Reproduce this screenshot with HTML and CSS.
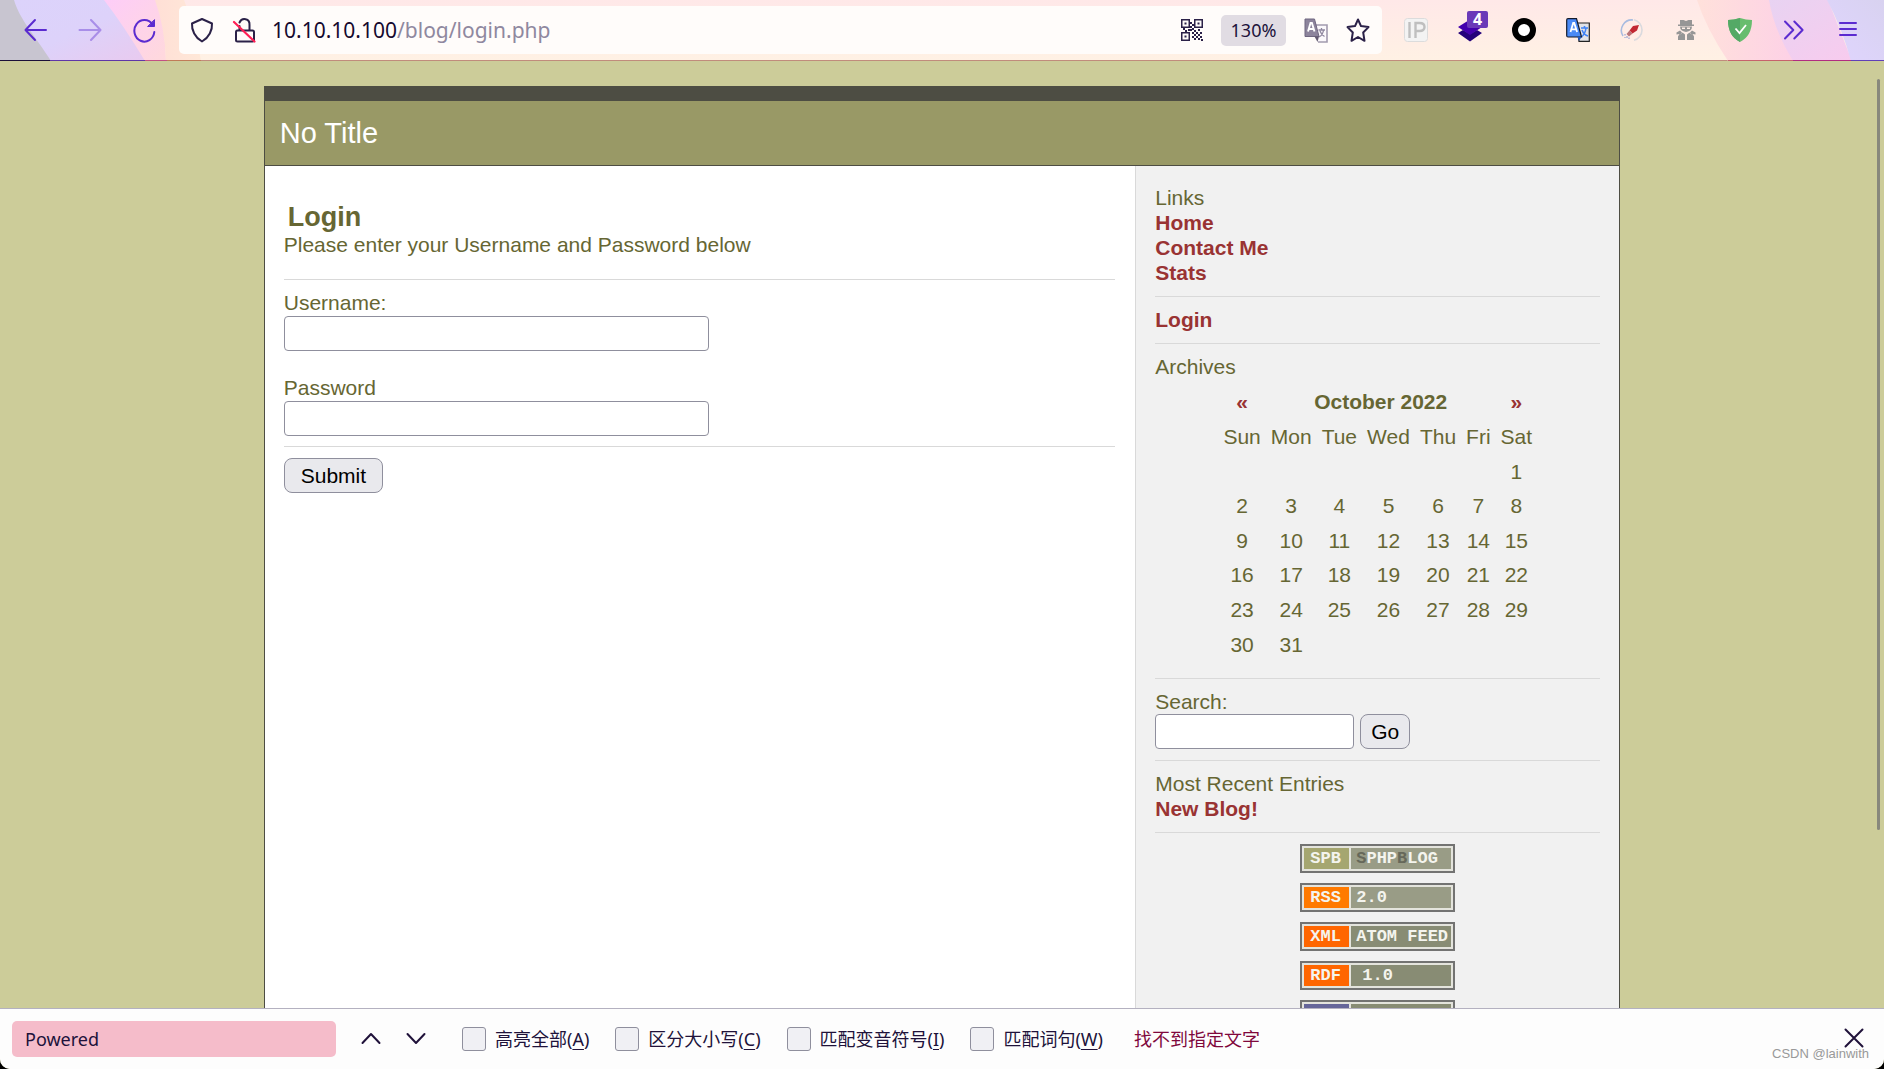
FILE: index.html
```html
<!DOCTYPE html>
<html lang="zh-CN">
<head>
<meta charset="utf-8">
<title>No Title</title>
<link rel="stylesheet" href="styles.css">
</head>
<body>
<div class="window">
<header class="toolbar">
  <svg class="theme theme-left" viewBox="0 0 201 61" width="201" height="61" aria-hidden="true">
    <defs>
      <linearGradient id="lav" x1="0" x2="1" y1="0" y2="1"><stop offset="0" stop-color="#dcd3fb"/><stop offset=".5" stop-color="#ddd2fa"/><stop offset="1" stop-color="#e9caef"/></linearGradient>
      <linearGradient id="pnk" x1="0" x2="1" y1="0" y2="1"><stop offset="0" stop-color="#fdcdf8"/><stop offset="1" stop-color="#ffd9dc"/></linearGradient>
      <linearGradient id="pch" x1="0" x2="1" y1="0" y2="0"><stop offset="0" stop-color="#ffdfd6"/><stop offset="1" stop-color="#ffe8d8"/></linearGradient>
    </defs>
    <path fill="#c8c5d0" d="M0 0H20L52 61H0z"/>
    <path fill="url(#lav)" d="M14 0H110L146 61H51C34 34 20 20 14 0z"/>
    <path fill="url(#pnk)" d="M104 0H156Q166 30 166 61H145Q124 26 104 0z"/>
    <path fill="url(#pch)" d="M155 0H184Q196 30 201 61H166Q165 28 155 0z"/>
    <path fill="#1c1038" d="M0 60h50v1H0z"/><path fill="#5f36a8" d="M50 60h95v1H50z"/><path fill="#c25084" d="M145 60h22v1h-22z"/><path fill="#c07c58" d="M167 60h34v1h-34z"/>
  </svg>
  <svg class="theme theme-right" viewBox="0 0 190 61" width="190" height="61" aria-hidden="true">
    <defs>
      <linearGradient id="r1" x1="0" x2="1" y1="0" y2="0"><stop offset="0" stop-color="#ffe1db"/><stop offset="1" stop-color="#fdd1e6"/></linearGradient>
      <linearGradient id="r2" x1="0" x2="1" y1="0" y2="1"><stop offset="0" stop-color="#e8d3f2"/><stop offset="1" stop-color="#f8cbee"/></linearGradient>
      <linearGradient id="r3" x1="0" x2="1" y1="1" y2="0"><stop offset="0" stop-color="#e0d5ff"/><stop offset="1" stop-color="#d8d2f0"/></linearGradient>
    </defs>
    <path fill="url(#r1)" d="M3 0H76L100 61H34Q12 28 3 0z"/>
    <path fill="url(#r2)" d="M75 0H134L158 61H99Q80 30 75 0z"/>
    <path fill="url(#r3)" d="M133 0H190V61H157Q148 28 133 0z"/>
    <path fill="#c6626c" d="M34 60h65v1H34z"/><path fill="#b12c80" d="M99 60h58v1H99z"/><path fill="#6040b8" d="M157 60h33v1h-33z"/>
  </svg>

  <nav class="nav-buttons" aria-label="Navigation">
    <button class="icon-btn" type="button" aria-label="Back"><svg viewBox="0 0 24 24" width="24" height="24" class="line purple"><path d="M22 12H2M11 2L1.500 12l9.500 10"/></svg></button>
    <button class="icon-btn dim" type="button" aria-label="Forward"><svg viewBox="0 0 24 24" width="24" height="24" class="line purple"><path d="M1.500 12H22M13 2l9.500 10L13 22"/></svg></button>
    <button class="icon-btn" type="button" aria-label="Reload"><svg viewBox="0 0 24 26" width="24" height="26" class="line purple"><path d="M20.500 7.500A10 10.800 0 1 0 22.300 15"/><path d="M22.500 3v6.500H16z" fill="#5b2bd0" stroke-width="1"/></svg></button>
  </nav>

  <div class="urlbar">
    <button class="icon-btn" type="button" aria-label="Tracking protection"><svg viewBox="0 0 24 26" width="24" height="26" class="line ink"><path d="M12 2L22 6.500C22.500 13 19 20.500 12 24.500 5 20.500 1.500 13 2 6.500z"/></svg></button>
    <button class="icon-btn" type="button" aria-label="Connection"><svg viewBox="0 0 24 26" width="24" height="26" class="line ink"><path d="M7.500 5.500C10 0 18 1.500 17.500 8v5.500M5 13.500h15.500q1.500 0 1.500 1.500v8q0 1.500-1.500 1.500h-15Q4 24.500 4 23v-8q0-1.500 1.500-1.500M7.500 9v4"/><path d="M2 5L22.500 24.500" stroke="#ff1f55" stroke-width="2.200"/></svg></button>
    <div class="url"><span class="host">10.10.10.100</span>/blog/login.php</div>
    <button class="icon-btn" type="button" aria-label="QR code"><svg viewBox="0 0 22 22" width="22" height="22" fill="#2b2148"><path fill-rule="evenodd" d="M0 0h9v9H0zM1.500 1.500v6h6v-6zM13 0h9v9h-9zM14.500 1.500v6h6v-6zM0 13h9v9H0zM1.500 14.500v6h6v-6zM3.500 3.500h2v2h-2zM16.500 3.500h2v2h-2zM3.500 16.500h2v2h-2zM9 3h2v2H9zM11 5h2v2h-2zM9 7h2v2H9zM2 9h2v2H2zM4 11h2v2H4zM7 10h4v2H7zM11 9h2v2h-2zM13 11h2v2h-2zM17 10h2v2h-2zM15 13h2v2h-2zM19 13h2v2h-2zM11 13h2v2h-2zM13 15h2v2h-2zM17 15h2v2h-2zM15 17h2v2h-2zM11 17h2v2h-2zM13 19h2v2h-2zM17 19h2v2h-2zM19 17h2v2h-2zM20 20h2v2h-2z"/></svg></button>
    <button class="zoom" type="button">130%</button>
    <button class="icon-btn" type="button" aria-label="Translate"><svg viewBox="0 0 24 25" width="24" height="25"><path d="M11 7h12v17H14" fill="#fbf8fb" stroke="#a29aae" stroke-width="1.600"/><path d="M14.500 12h6.500M17.500 10v2M15 19q4-2 4.500-7M16 13q1.500 4 4.500 5.500" fill="none" stroke="#8f879f" stroke-width="1.300"/><path d="M1 1h9.500L15 18.500H1z" fill="#8d849c" stroke="#6f6680"/><path d="M10.500 18.500h4.500L13.500 24z" fill="#62586f"/><path d="M4 13.500L6.500 5h1.400L10.500 13.500M5 11h4.500" fill="none" stroke="#fff" stroke-width="1.900"/></svg></button>
    <button class="icon-btn" type="button" aria-label="Bookmark"><svg viewBox="0 0 24 24" width="24" height="24" class="line ink"><path d="M12 1.500l3 6.600 7.500 1-5.300 5.400 1.300 8.300L12 19l-6.500 3.800 1.300-8.300L1.500 9.100l7.500-1z"/></svg></button>
  </div>

  <div class="extensions">
    <button class="icon-btn" type="button" aria-label="IP"><svg viewBox="0 0 24 24" width="24" height="24"><rect x=".5" y=".5" width="23" height="23" rx="3" fill="#f3f3f3" stroke="#dcdcdc"/><path d="M5.500 4v16M11.500 20V5h4q5 0 5 4t-5 4h-4" fill="none" stroke="#bfbfbf" stroke-width="2.400"/></svg></button>
    <button class="icon-btn" type="button" aria-label="Layers"><svg viewBox="0 0 24 24" width="24" height="24"><path fill="#23007a" d="M0 15l5-3 7 4 7-4 5 3-12 8.500z"/><path fill="#4300ad" d="M12 1.500L24 9l-12 8L0 9z"/></svg><span class="count">4</span></button>
    <button class="icon-btn" type="button" aria-label="Ring"><svg viewBox="0 0 24 24" width="24" height="24"><circle cx="12" cy="12" r="9" fill="#fff" stroke="#000" stroke-width="6"/></svg></button>
    <button class="icon-btn" type="button" aria-label="Translate page"><svg viewBox="0 0 24 24" width="24" height="24"><path d="M11 5h12.300v18.300H13z" fill="#e2e2e6" stroke="#222" stroke-width="1.200"/><path d="M15 10h7M18.500 8v2M15 19q4-2 5-9M16 12q2 5 6 6" fill="none" stroke="#3f82f5" stroke-width="1.600"/><path d="M2 .7h8.500L15.500 19H2Q.7 19 .7 17.500V2Q.7.700 2 .7z" fill="#4a8af6" stroke="#141b2c" stroke-width="1.200"/><path d="M11.500 19h4L13 23z" fill="#1e57bd"/><path d="M4.500 14L7.200 5h1l2.900 9M5.500 11.300h4.500" fill="none" stroke="#fff" stroke-width="1.800"/></svg></button>
    <button class="icon-btn" type="button" aria-label="Rocket"><svg viewBox="0 0 24 24" width="24" height="24"><path d="M13 2A10.500 10.500 0 0 0 3 18" fill="none" stroke="#a9bce0" stroke-width="1.600"/><path d="M14 1.800A10.500 10.500 0 0 1 14 22.200" fill="none" stroke="#dadade" stroke-width="1.600"/><path d="M19 7l-6 1-3.500 4.500 3 3 4.500-3z" fill="#c22732"/><path d="M9.500 12.500l-3 3.500 2.500 2.500 3.500-3z" fill="#b9767a"/><path d="M5 16v1.500M7 18v2M4.500 20l1-1M9 19.500v1.500" stroke="#8294cf"/></svg></button>
    <button class="icon-btn" type="button" aria-label="Agent"><svg viewBox="0 0 24 24" width="24" height="24" fill="#969696"><path d="M6 2h3.500l2.500 1 2.500-1H18v4.500h2V8H4V6.500h2zM6 8.500h12q0 4.500-6 5.500-6-1-6-5.500z"/><path d="M8 9.500h3V11H8zM13 9.500h3V11h-3z" fill="#fff0e8"/><path d="M8.500 14.500l2.500 2V22H4v-3.500l1.500-2.500-3 .5v-2L6 12.500l2 2-2 2.500zM15.500 14.500l-2.500 2V22h7v-3.500L18.500 16l3 .5v-2L18 12.500l-2 2 2 2.500z"/></svg></button>
    <button class="icon-btn" type="button" aria-label="Shield"><svg viewBox="0 0 24 24" width="24" height="24"><path fill="#68bd6e" d="M12 0q6 2 12 2Q24 18 12 24 0 18 0 2 6 2 12 0z"/><path fill="#54a966" d="M12 0v24Q0 18 0 2 6 2 12 0z"/><path d="M7.500 10.500L11.500 15l6.500-8" fill="none" stroke="#fff" stroke-width="1.800"/></svg></button>
    <button class="icon-btn" type="button" aria-label="More tools"><svg viewBox="0 0 24 24" width="24" height="24" class="line purple"><path d="M3 3.500L11.300 12 3 20.500M12.300 3.500L20.600 12l-8.300 8.500"/></svg></button>
    <button class="icon-btn" type="button" aria-label="Menu"><svg viewBox="0 0 24 24" width="24" height="24" class="line purple"><path d="M4 5h16M4 11h16M4 17h16"/></svg></button>
  </div>
</header>

<div class="viewport">
  <div class="page">
    <h1 class="page-title">No Title</h1>
    <div class="columns">
      <main class="content">
        <h2>Login</h2>
        <p class="intro">Please enter your Username and Password below</p>
        <form class="login">
          <div class="fields">
            <label for="user">Username:</label>
            <input class="field" id="user" type="text">
            <label for="pass" class="second">Password</label>
            <input class="field" id="pass" type="password">
          </div>
          <button class="btn submit" type="submit">Submit</button>
        </form>
      </main>
      <aside class="sidebar">
        <section class="block">
          Links
          <a href="#">Home</a>
          <a href="#">Contact Me</a>
          <a href="#">Stats</a>
        </section>
        <section class="block"><a href="#">Login</a></section>
        <section class="block">
          Archives
          <table class="calendar">
            <tr><td><a href="#">«</a></td><th colspan="5">October 2022</th><td><a href="#">»</a></td></tr>
            <tr><td>Sun</td><td>Mon</td><td>Tue</td><td>Wed</td><td>Thu</td><td>Fri</td><td>Sat</td></tr>
            <tr><td></td><td></td><td></td><td></td><td></td><td></td><td>1</td></tr>
            <tr><td>2</td><td>3</td><td>4</td><td>5</td><td>6</td><td>7</td><td>8</td></tr>
            <tr><td>9</td><td>10</td><td>11</td><td>12</td><td>13</td><td>14</td><td>15</td></tr>
            <tr><td>16</td><td>17</td><td>18</td><td>19</td><td>20</td><td>21</td><td>22</td></tr>
            <tr><td>23</td><td>24</td><td>25</td><td>26</td><td>27</td><td>28</td><td>29</td></tr>
            <tr><td>30</td><td>31</td><td></td><td></td><td></td><td></td><td></td></tr>
          </table>
        </section>
        <section class="block">
          <label for="search">Search:</label>
          <form class="search"><input class="field" id="search" type="text"><button class="btn" type="submit">Go</button></form>
        </section>
        <section class="block">
          Most Recent Entries
          <a href="#">New Blog!</a>
        </section>
        <div class="badges">
          <a class="badge pale" href="#"><span class="tag olive">SPB</span><span class="name"><i>S</i>PHP<i>B</i>LOG</span></a>
          <a class="badge pale" href="#"><span class="tag amber">RSS</span><span class="name">2.0</span></a>
          <a class="badge" href="#"><span class="tag">XML</span><span class="name">ATOM FEED</span></a>
          <a class="badge" href="#"><span class="tag">RDF</span><span class="name indent">1.0</span></a>
          <a class="badge" href="#" aria-label="PHP"><span class="tag indigo"></span><span class="name"></span></a>
        </div>
      </aside>
    </div>
  </div>
  <div class="scroll-thumb"></div>
</div>

<footer class="findbar">
  <input class="find-input" type="text" value="Powered" aria-label="Find in page">
  <button class="icon-btn" type="button" aria-label="Previous"><svg viewBox="0 0 24 24" width="24" height="24" class="line dark"><path d="M3.500 16L12 7l8.500 9"/></svg></button>
  <button class="icon-btn" type="button" aria-label="Next"><svg viewBox="0 0 24 24" width="24" height="24" class="line dark"><path d="M3.500 7l8.500 9 8.500-9"/></svg></button>
  <div class="options">
    <label><input type="checkbox"><span>高亮全部(<u>A</u>)</span></label>
    <label><input type="checkbox"><span>区分大小写(<u>C</u>)</span></label>
    <label><input type="checkbox"><span>匹配变音符号(<u>I</u>)</span></label>
    <label><input type="checkbox"><span>匹配词句(<u>W</u>)</span></label>
  </div>
  <span class="status">找不到指定文字</span>
  <button class="icon-btn close" type="button" aria-label="Close"><svg viewBox="0 0 24 24" width="24" height="24" class="line dark"><path d="M3.500 2.500l17 17M20.500 2.500l-17 17"/></svg></button>
  <span class="watermark">CSDN @lainwith</span>
</footer>
</div>
</body>
</html>
```
FILE: styles.css
```css
* { box-sizing: border-box; }

body {
  margin: 0;
  background: #000;
  font-family: "Liberation Sans", Arial, sans-serif;
}

.window {
  height: 100vh;
  display: flex;
  flex-direction: column;
  overflow: hidden;
  border-radius: 0 0 10px 10px;
  background: #cccc99;
}

/* Toolbar */
.toolbar {
  position: relative;
  flex: none;
  height: 61px;
  display: flex;
  align-items: center;
  padding: 0 24px;
  border-bottom: 1px solid #c08c7c;
  background: linear-gradient(#ffe8e8, #fff1e4);
  font-family: "Noto Sans", "Noto Sans CJK SC", sans-serif;
}
.theme { position: absolute; top: 0; }
.theme-left { left: 0; }
.theme-right { right: 0; }

.icon-btn {
  position: relative;
  flex: none;
  display: flex;
  padding: 0;
  border: 0;
  background: none;
}
.line { fill: none; stroke-width: 2; stroke-linejoin: round; stroke-linecap: round; }
.purple { stroke: #5b2bd0; }
.ink { stroke: #2b2148; }
.dark { stroke: #20123a; }
.dim { opacity: .4; }

.nav-buttons { display: flex; align-items: center; gap: 30px; width: 155px; }

.urlbar {
  position: relative;
  flex: 1;
  height: 48px;
  display: flex;
  align-items: center;
  gap: 18px;
  padding: 0 12px 0 11px;
  border-radius: 5px;
  background: #fffcfa;
}
.url {
  flex: 1;
  margin-left: -2px;
  font-size: 21px;
  color: #8f889f;
  white-space: nowrap;
}
.host { color: #15092e; }
.zoom {
  width: 65px;
  height: 31px;
  padding: 0;
  border: 0;
  border-radius: 5px;
  background: #e1dce3;
  color: #20123a;
  font: 18px "Noto Sans", sans-serif;
}

.extensions { display: flex; align-items: center; gap: 30px; margin-left: 22px; }
.count {
  position: absolute;
  right: -6px;
  top: -7px;
  width: 21px;
  height: 17px;
  border-radius: 2px;
  background: #6a39b8;
  color: #fff;
  font: bold 16px/16px "Noto Sans", sans-serif;
  text-align: center;
}

/* Web page */
.viewport {
  position: relative;
  flex: 1;
  min-height: 0;
  overflow: hidden;
  padding: 25px 14% 0;
  font-size: 21px;
  line-height: 25px;
  color: #666633;
}
.scroll-thumb {
  position: absolute;
  right: 4px;
  top: 18px;
  bottom: 178px;
  width: 3px;
  border-radius: 2px;
  background: #88887c;
}
.page {
  border: 1px solid #4d4d43;
  border-top-width: 15px;
  background: #fff;
}
.page-title {
  margin: 0;
  padding: 16px 15px;
  border-bottom: 1px solid #4d4d43;
  background: #999966;
  color: #fff;
  font-size: 29px;
  line-height: 32px;
  font-weight: normal;
}
.columns { display: flex; }
.content { flex: 1; padding: 36px 20px 0 19px; }
.content h2 { margin: 0 0 0 4px; font-size: 27px; line-height: 30px; }
.intro { margin: 0; padding-bottom: 22px; border-bottom: 1px solid #d9d9d9; }
.fields {
  display: flex;
  flex-direction: column;
  align-items: flex-start;
  padding: 10px 0;
  border-bottom: 1px solid #d9d9d9;
}
.fields .field { width: 425px; margin-top: 1px; }
.second { margin-top: 24px; }
.field {
  height: 35px;
  padding: 0 4px;
  border: 1px solid #8f8f9d;
  border-radius: 4px;
  background: #fff;
  font: inherit;
}
.btn {
  height: 35px;
  padding: 0 10px 1px;
  border: 1px solid #8f8f9d;
  border-radius: 8px;
  background: #e9e9ed;
  color: #000;
  font: inherit;
}
.submit { margin-top: 11px; padding: 0 16px 1px; }

.sidebar {
  flex: none;
  width: 484px;
  padding: 9px 19px 20px;
  border-left: 1px solid #d9d9d9;
  background: #f1f1f1;
}
.block { padding: 10px 0 11px; border-bottom: 1px solid #d9d9d9; }
.block a { display: block; color: #993333; font-weight: bold; text-decoration: none; }
.block label { display: block; }
.calendar {
  height: 277px;
  margin: 6px auto 5px;
  border-collapse: collapse;
  line-height: 24px;
  text-align: center;
}
.calendar td, .calendar th { padding: 5px; }
.search { display: flex; gap: 6px; }
.search .field { width: 199px; }

.badges { display: flex; flex-direction: column; align-items: center; gap: 10px; padding-top: 11px; }
.badge {
  display: flex;
  gap: 2px;
  width: 155px;
  height: 29px;
  padding: 2px;
  border: 2px solid #737372;
  background: #e4e4dd;
  color: #f4f4ee;
  font: bold 17px/21px "Liberation Mono", monospace;
  text-decoration: none;
  white-space: nowrap;
}
.tag { width: 45px; padding-left: 6px; background: #ff6600; }
.name { flex: 1; padding-left: 5px; background: #888c74; }
.indent { padding-left: 11px; }
.pale .name { background: #999c86; }
.olive { background: #a5a670; }
.amber { background: #ff7a00; }
.indigo { background: #666699; }
.name i { color: #66685a; font-style: normal; }

/* Find bar */
.findbar {
  position: relative;
  flex: none;
  height: 61px;
  display: flex;
  align-items: center;
  padding: 0 18px 0 12px;
  border-top: 1px solid #b4b1c0;
  background: #fdfdfd;
  color: #20123a;
  font: 18px/24px "Noto Sans", "Noto Sans CJK SC", sans-serif;
}
.find-input {
  width: 324px;
  height: 36px;
  margin-right: 23px;
  padding: 0 13px;
  border: 0;
  border-radius: 5px;
  background: #f5bcca;
  color: #20123a;
  font: inherit;
}
.findbar .icon-btn + .icon-btn { margin-left: 21px; }
.options { display: flex; gap: 26px; margin: 0 31px 0 34px; }
.options label { display: flex; align-items: center; gap: 9px; white-space: nowrap; }
.options input {
  appearance: none;
  width: 24px;
  height: 24px;
  margin: 0;
  border: 1px solid #8f8f9d;
  border-radius: 3px;
  background: #f0f0f4;
}
.options u { text-underline-offset: 3px; }
.status { color: #80083c; }
.findbar .close { margin-left: auto; }
.watermark {
  position: absolute;
  right: 15px;
  bottom: 7px;
  font: 13px/16px "Liberation Sans", Arial, sans-serif;
  color: #999;
}
```
